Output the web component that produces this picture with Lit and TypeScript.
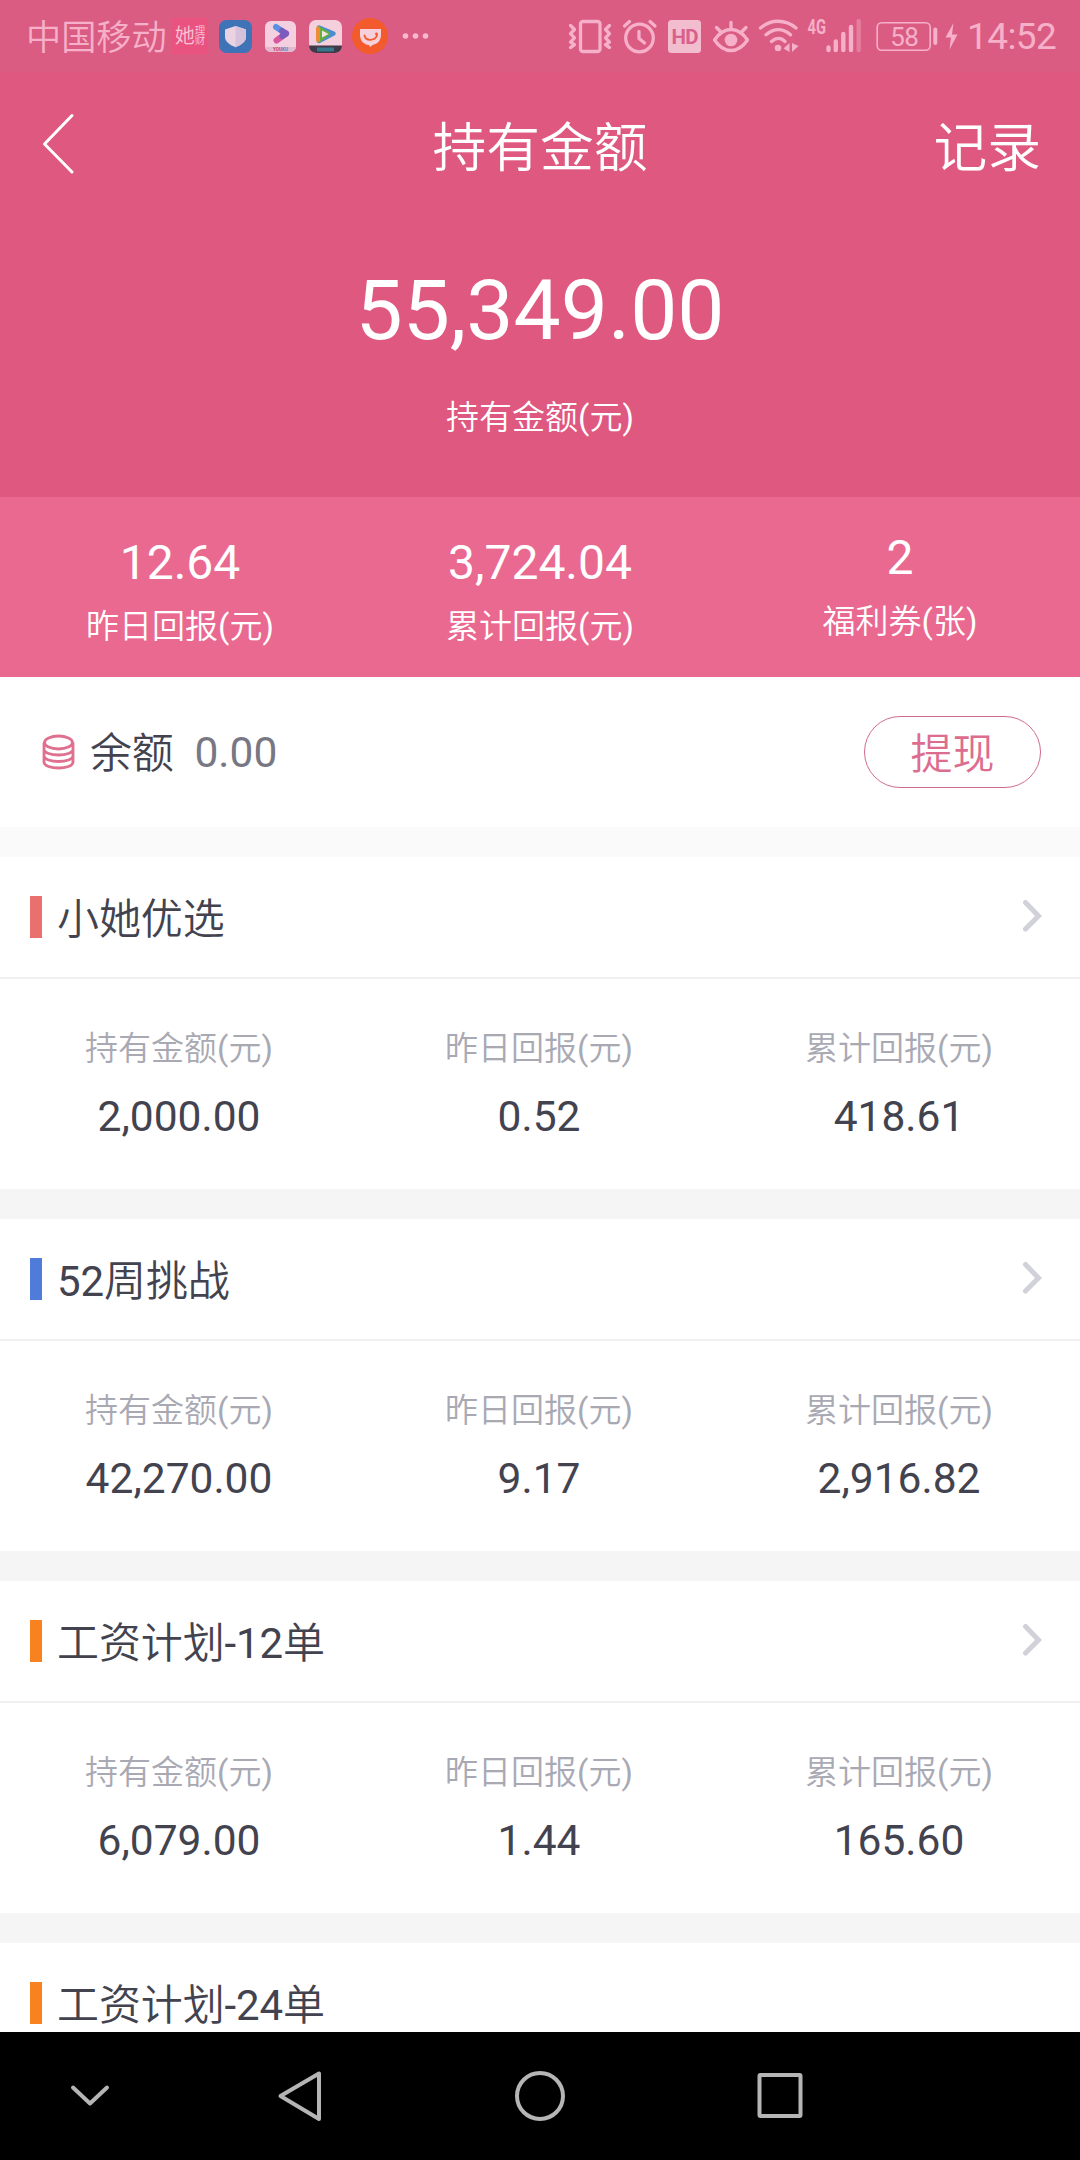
import { LitElement, html, css, svg, nothing } from "lit";
import { customElement, property } from "lit/decorators.js";

interface Stat {
  label: string;
  value: string;
}

interface Plan {
  name: string;
  tone: string;
  stats: Stat[];
}

const planStats = (held: string, yesterday: string, total: string): Stat[] => [
  { label: "持有金额(元)", value: held },
  { label: "昨日回报(元)", value: yesterday },
  { label: "累计回报(元)", value: total },
];

const PLANS: Plan[] = [
  { name: "小她优选", tone: "coral", stats: planStats("2,000.00", "0.52", "418.61") },
  { name: "52周挑战", tone: "blue", stats: planStats("42,270.00", "9.17", "2,916.82") },
  { name: "工资计划-12单", tone: "orange", stats: planStats("6,079.00", "1.44", "165.60") },
  { name: "工资计划-24单", tone: "orange", stats: [] },
];

const SUMMARY: Stat[] = [
  { label: "昨日回报(元)", value: "12.64" },
  { label: "累计回报(元)", value: "3,724.04" },
  { label: "福利券(张)", value: "2" },
];

@customElement("status-bar")
class StatusBar extends LitElement {
  static styles = css`
    :host {
      display: flex;
      align-items: center;
      justify-content: space-between;
      height: 72px;
      flex: none;
      padding: 0 24px 0 26px;
      box-sizing: border-box;
      background: #da5c82;
      color: #f6b0c9;
      font-family: Roboto, "Noto Sans CJK SC DemiLight", "Noto Sans CJK SC", sans-serif;
    }
    .group { display: flex; align-items: center; height: 72px; }
    svg { display: block; height: 72px; flex: none; }
    .carrier { font-size: 35.2px; line-height: 72px; padding-top: 3px; width: 146px; white-space: nowrap; }
    .tile {
      display: flex; align-items: center; justify-content: center;
      width: 36px; height: 36px; background: #ea527f; color: #f8c4d6; margin-right: 11px;
    }
    .big { font-size: 20px; line-height: 36px; font-weight: 500; }
    .small { display: flex; flex-direction: column; font-size: 10.5px; line-height: 10px; }
    .g13 { margin-left: 13px; }
    .g10 { margin-left: 10px; }
    .time { font-size: 37px; line-height: 72px; padding-top: 1px; margin-left: 7px; width: 89px; letter-spacing: -0.6px; white-space: nowrap; }
    .t { font-family: Roboto, sans-serif; }
  `;

  render() {
    return html`
      <div class="group">
        <span class="carrier">中国移动</span>
        <span class="tile"><span class="big">她</span><span class="small"><span>理</span><span>财</span></span></span>
        <svg width="33" viewBox="219 0 33 72">
          <rect x="219" y="20" width="33" height="33" rx="7.5" fill="#3e74b7"/>
          <path d="M235.500 26 l10.500 3.600 v7.500 c0 4.500 -5 8.200 -10.500 10.200 c-5.500 -2 -10.500 -5.700 -10.500 -10.200 v-7.500z" fill="#e9d3e2"/>
          <path d="M235.500 26 l10.500 3.600 v7.500 c0 4.500 -5 8.200 -10.500 10.200z" fill="#d5c1d9"/>
        </svg>
        <svg class="g13" width="31" viewBox="265 0 31 72">
          <rect x="265" y="21" width="31" height="31" rx="6" fill="#f4cfdf"/>
          <path d="M265 47 h31 a6 5 0 0 1 -6 5 h-19 a6 5 0 0 1 -6 -5z" fill="#e3b9cf"/>
          <path d="M276 27 L286 33.500" stroke="#5b8fe0" stroke-width="6" stroke-linecap="round"/>
          <path d="M286 33.500 L276.500 40.500" stroke="#d8559f" stroke-width="6" stroke-linecap="round"/>
          <path d="M282 31 L286 33.500 L282.500 36" stroke="#7a5cc0" stroke-width="6" stroke-linecap="round" stroke-linejoin="round" fill="none"/>
          <text class="t" x="280.500" y="51.300" font-size="4.600" font-weight="700" text-anchor="middle" fill="#c9405e">YOU<tspan fill="#4d86c8">KU</tspan></text>
        </svg>
        <svg class="g13" width="33" viewBox="309 0 33 72">
          <defs><clipPath id="tile"><rect x="309" y="20" width="33" height="33" rx="7"/></clipPath></defs>
          <g clip-path="url(#tile)">
            <rect x="309" y="20" width="33" height="33" fill="#f4d0dc"/>
            <rect x="309" y="45.500" width="33" height="8" fill="#413848"/>
            <rect x="317" y="47.500" width="17" height="4" fill="#34798c"/>
          </g>
          <path d="M319 27.500 L333.500 33.500 L319 41z" fill="#4c8cd0" stroke="#4c8cd0" stroke-width="4.500" stroke-linejoin="round"/>
          <path d="M318.500 28 L328 33.800 L318.500 40.500z" fill="#62b03c" stroke="#62b03c" stroke-width="4" stroke-linejoin="round"/>
          <path d="M318 28.500 V40" stroke="#ee8c35" stroke-width="4" stroke-linecap="round"/>
          <path d="M322 30.500 L328.500 34 L322 37.500z" fill="#f7e3e6"/>
        </svg>
        <svg class="g10" width="36" viewBox="352 0 36 72">
          <circle cx="370" cy="36" r="18" fill="#f35a2c"/>
          <path d="M360 29 h21 v6 c0 5.500 -3.500 9 -8 9.800 l-3 2.200 l-1 -2 c-5.500 -0.500 -9 -4.500 -9 -10z" fill="#f7d0dc"/>
          <path d="M364.500 35.500 c1 5.500 10 6 12.500 0" stroke="#f35a2c" stroke-width="1.800" stroke-linecap="round" fill="none"/>
          <circle cx="376.500" cy="34" r="1.400" fill="#f35a2c"/>
        </svg>
        <svg class="g13" width="30" viewBox="401 0 30 72" fill="#f6b9ce">
          <circle cx="405.500" cy="36" r="2.800"/><circle cx="415.500" cy="36" r="2.800"/><circle cx="425.500" cy="36" r="2.800"/>
        </svg>
      </div>
      <div class="group">
        <svg width="266" viewBox="567 0 266 72" fill="none" stroke="#f6b0c9" stroke-width="3.300" stroke-linecap="round" stroke-linejoin="round">
          <rect x="580.500" y="21.500" width="19.500" height="30" rx="2.500"/>
          <path d="M570.500 25.500 l4 4 l-4 4.200 l4 4.200 l-4 4.200 l4 2.500 l-4 3"/>
          <path d="M609.500 25.500 l-4 4 l4 4.200 l-4 4.200 l4 4.200 l-4 2.500 l4 3"/>
          <circle cx="639.500" cy="38" r="13.800"/>
          <path d="M639 31.500 V38.500 L644.500 43"/>
          <path d="M624.500 26 L629.500 21.500 M650 21.500 L655 26"/>
          <rect x="668" y="20" width="33" height="33" rx="3.500" fill="#f3bdd0" stroke="none"/>
          <text class="t" x="684.700" y="44" font-size="20.500" font-weight="700" text-anchor="middle" fill="#d9608a" stroke="none" letter-spacing="-0.600">HD</text>
          <path d="M714.500 40 C724 26 738 26 747.500 40 C738 54 724 54 714.500 40z"/>
          <circle cx="731" cy="40" r="6.300" fill="#f6b0c9" stroke="none"/>
          <path d="M731 29 V22.500 M720.500 31.500 L716.500 27.500 M742 31.500 L746 27.500"/>
          <path d="M760.500 28 C771 19 785 19 796 28 M766 34.800 C774 28 783 28 790.500 34.800 M771.500 41.500 C776 37.500 781 37.500 785 41.500"/>
          <circle cx="778" cy="48" r="3.300" fill="#f6b0c9" stroke="none"/>
          <path d="M789.500 43 V52 L783.500 48.500z M792 43 L798.500 46 L792 52z" fill="#f6b0c9" stroke="none"/>
          <text class="t" x="807.500" y="34" font-size="20" font-weight="700" fill="#f6b0c9" stroke="none" textLength="18.500" lengthAdjust="spacingAndGlyphs">4G</text>
        </svg>
        <svg width="127" viewBox="833 0 127 72" overflow="visible" fill="none" stroke="#f6b0c9">
          <path d="M828.500 47.500 V50 M835.800 41.500 V50 M843.300 34 V50 M851 27 V50" stroke-width="4.400" stroke-linecap="round"/>
          <path d="M858.700 21 V50" stroke-width="4.400" stroke-linecap="round" opacity="0.400"/>
          <rect x="877.200" y="22.800" width="53" height="27.500" rx="4.500" stroke-width="1.600"/>
          <path d="M935.300 29.500 V43" stroke-width="4" stroke-linecap="round"/>
          <text class="t" x="904.300" y="45.700" font-size="26" text-anchor="middle" fill="#f6b0c9" stroke="none" letter-spacing="-0.500">58</text>
          <path d="M953.500 23 L945.500 37.500 H951 L949.500 49.500 L957.500 34.500 H952z" fill="#f6b0c9" stroke="none"/>
        </svg>
        <span class="time">14:52</span>
      </div>
    `;
  }
}

@customElement("plan-card")
class PlanCard extends LitElement {
  @property({ attribute: false }) plan!: Plan;

  static styles = css`
    :host { display: block; flex: none; background: #fff; }
    .head {
      display: flex; align-items: center; height: 120px; padding: 0 37px 0 30px;
      border-bottom: 2px solid #f0f0f0;
    }
    .mark { width: 12px; height: 42px; margin-right: 15px; }
    .coral { background: #ea7070; }
    .blue { background: #4f7bdb; }
    .orange { background: #f98220; }
    .name { flex: 1; font-size: 42px; line-height: 60px; color: #43434f; padding-top: 5px; letter-spacing: -0.1px; }
    .arrow { display: block; margin-bottom: 3px; }
    .stats { display: grid; grid-template-columns: repeat(3, 1fr); height: 210px; text-align: center; }
    .stat { padding-right: 2px; }
    .label { padding-top: 46px; font-size: 33px; line-height: 48px; color: #a9a9b4; }
    .value { padding-top: 14px; font-size: 42.5px; line-height: 60px; color: #43434f; }
  `;

  render() {
    const { name, tone, stats } = this.plan;
    return html`
      <div class="head">
        <span class="mark ${tone}"></span>
        <span class="name">${name}</span>
        ${stats.length
          ? html`<svg class="arrow" width="22" height="34" viewBox="0 0 22 34" fill="none" stroke="#d1d1d9" stroke-width="5" stroke-linecap="round"><path d="M4.500 3.500 L17.500 17 L4.500 30"/></svg>`
          : nothing}
      </div>
      ${stats.length
        ? html`<div class="stats">
            ${stats.map((s) => html`<div class="stat"><div class="label">${s.label}</div><div class="value">${s.value}</div></div>`)}
          </div>`
        : nothing}
    `;
  }
}

@customElement("app-root")
class AppRoot extends LitElement {
  static styles = css`
    :host {
      display: flex; flex-direction: column; width: 1080px; height: 2160px; overflow: hidden;
      background: #fff; font-family: Roboto, "Noto Sans CJK SC DemiLight", "Noto Sans CJK SC", sans-serif; font-weight: 400;
    }
    .hero { flex: none; height: 425px; background: #df587f; color: #fff; text-align: center; }
    .bar { display: grid; grid-template-columns: 200px 1fr 200px; align-items: center; height: 148px; }
    .back { display: block; margin-left: 40px; margin-bottom: 4px; }
    .title { font-size: 53.8px; line-height: 80px; padding-top: 5px; }
    .record { font-size: 53.8px; line-height: 80px; padding-top: 5px; text-align: right; padding-right: 39px; }
    .total { font-size: 84px; line-height: 100px; padding-top: 41px; }
    .caption { font-size: 33px; line-height: 48px; padding-top: 33px; }
    .summary {
      flex: none; display: grid; grid-template-columns: repeat(3, 1fr); height: 180px;
      background: #ea6990; color: #fff; text-align: center;
    }
    .cell { padding-top: 36px; }
    .cell:last-child { padding-top: 31px; }
    .num { font-size: 48px; line-height: 60px; }
    .lab { font-size: 33px; line-height: 48px; padding-top: 10px; color: #fff; }
    .balance { flex: none; display: flex; align-items: center; height: 150px; padding: 0 39px 0 42px; font-size: 42px; line-height: 60px; }
    .coins { display: block; margin-right: 15px; }
    .name { color: #43434f; padding-top: 4px; letter-spacing: -0.3px; }
    .amount { font-size: 42.5px; color: #787884; margin-left: 21px; padding-top: 2px; flex: 1; }
    .withdraw {
      box-sizing: border-box; width: 177px; height: 72px; border: 1px solid #cf6b8c; border-radius: 36px;
      text-align: center; line-height: 76px; color: #dc6d8f;
    }
    .gap { flex: none; height: 30px; background: #f5f5f5; }
    .pale { background: #fafafa; }
    .plans { flex: 1; min-height: 0; overflow: hidden; display: flex; flex-direction: column; }
    .nav { flex: none; height: 128px; background: #000; }
    .nav svg { display: block; }
  `;

  render() {
    const layers = svg`<path d="M2 13 V28 C2 36 31 36 31 28 V13 M2 15 C2 23 31 23 31 15 M2 21.500 C2 29.500 31 29.500 31 21.500"/>`;
    return html`
      <status-bar></status-bar>
      <div class="hero">
        <div class="bar">
          <svg class="back" width="36" height="62" viewBox="0 0 36 62" fill="none" stroke="#fff" stroke-width="3" stroke-linecap="round" stroke-linejoin="round"><path d="M32 2.500 L4.500 31 L32 59"/></svg>
          <div class="title">持有金额</div>
          <div class="record">记录</div>
        </div>
        <div class="total">55,349.00</div>
        <div class="caption">持有金额(元)</div>
      </div>
      <div class="summary">
        ${SUMMARY.map((s) => html`<div class="cell"><div class="num">${s.value}</div><div class="lab">${s.label}</div></div>`)}
      </div>
      <div class="balance">
        <svg class="coins" width="33" height="36" viewBox="0 0 33 36" fill="none" stroke="#e0708f" stroke-width="2.800">
          <ellipse cx="16.500" cy="8.500" rx="14" ry="6.500"/><path d="M2 8.500 V13 M31 8.500 V13"/>${layers}
        </svg>
        <span class="name">余额</span>
        <span class="amount">0.00</span>
        <span class="withdraw">提现</span>
      </div>
      <div class="gap pale"></div>
      <div class="plans">
        ${PLANS.map((p, i) => html`${i ? html`<div class="gap"></div>` : nothing}<plan-card .plan=${p}></plan-card>`)}
      </div>
      <div class="nav">
        <svg width="1080" height="128" viewBox="0 0 1080 128" fill="none" stroke="#b5b5b5" stroke-width="4" stroke-linejoin="round" stroke-linecap="round">
          <path d="M73 55.500 L90 71.500 L107 55.500"/>
          <path d="M319 41.500 V87 L280.500 64z"/>
          <circle cx="540" cy="64" r="23"/>
          <rect x="759.500" y="43" width="41" height="41" rx="1"/>
        </svg>
      </div>
    `;
  }
}
